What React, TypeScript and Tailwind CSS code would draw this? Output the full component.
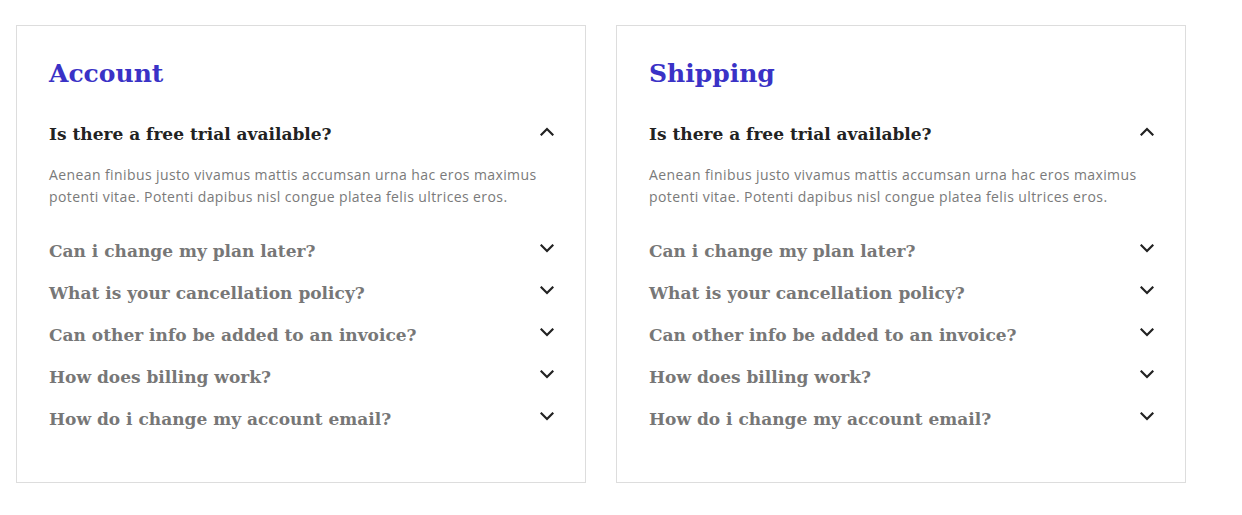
import React from 'react';

const questions = [
  'Can i change my plan later?',
  'What is your cancellation policy?',
  'Can other info be added to an invoice?',
  'How does billing work?',
  'How do i change my account email?',
];

const Chevron = ({ up = false }: { up?: boolean }) => (
  <svg width="14" height="9" viewBox="0 0 14 9" className="-translate-y-[4px] shrink-0">
    <path
      d={up ? 'M1.5 7.5 L7 2 L12.5 7.5' : 'M1.5 1.5 L7 7 L12.5 1.5'}
      fill="none"
      stroke="#222"
      strokeWidth="2.2"
      strokeLinecap="square"
    />
  </svg>
);

const FaqCard = ({ title }: { title: string }) => (
  <div className="w-[570px] h-[458px] border border-[#dddddd] bg-white pt-[30px] pl-[32px] pr-[31px]">
    <h2 className="text-[25px] leading-[35px] font-bold text-[#3a32c6] font-['DejaVu_Serif',serif]">
      {title}
    </h2>
    <div className="mt-[23px]">
      <div className="h-[42px] flex items-center justify-between">
        <span className="text-[17px] font-bold text-[#222222] font-['DejaVu_Serif',serif]">
          Is there a free trial available?
        </span>
        <Chevron up />
      </div>
      <p className="mt-[8px] mb-[23px] text-[14px] leading-[22px] tracking-[0.4px] text-[#7a7a7a] font-['Open_Sans',sans-serif]">
        Aenean finibus justo vivamus mattis accumsan urna hac eros maximus potenti vitae. Potenti dapibus nisl
        congue platea felis ultrices eros.
      </p>
      {questions.map((q) => (
        <div key={q} className="h-[42px] flex items-center justify-between">
          <span className="text-[17px] font-bold text-[#777777] font-['DejaVu_Serif',serif]">{q}</span>
          <Chevron />
        </div>
      ))}
    </div>
  </div>
);

export default function App() {
  return (
    <div className="w-[1242px] h-[515px] bg-white pl-[16px] pt-[25px] flex gap-[30px]">
      <FaqCard title="Account" />
      <FaqCard title="Shipping" />
    </div>
  );
}
